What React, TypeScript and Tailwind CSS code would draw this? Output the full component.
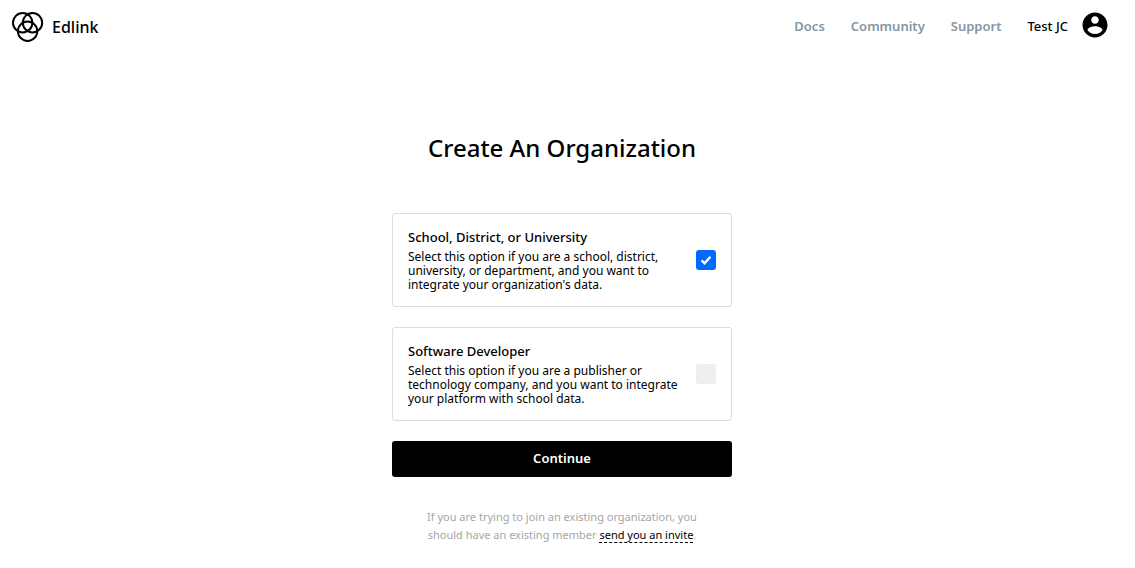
import { useState } from "react";

const links = ["Docs", "Community", "Support"];

const options = [
  {
    id: "school",
    title: "School, District, or University",
    text: "Select this option if you are a school, district, university, or department, and you want to integrate your organization's data.",
  },
  {
    id: "developer",
    title: "Software Developer",
    text: "Select this option if you are a publisher or technology company, and you want to integrate your platform with school data.",
  },
];

function Logo() {
  return (
    <svg className="h-[30px] w-8" viewBox="0 0 32 30" fill="none" stroke="#000" strokeWidth="2" aria-hidden="true">
      <circle cx="10.700" cy="10.700" r="9.700" />
      <circle cx="20.500" cy="10.700" r="9.700" />
      <circle cx="15.600" cy="19.200" r="9.700" />
    </svg>
  );
}

function Avatar() {
  return (
    <svg className="size-[30px]" viewBox="0 0 24 24" fill="#000" aria-hidden="true">
      <path d="M12 2C6.48 2 2 6.48 2 12s4.48 10 10 10 10-4.480 10-10S17.520 2 12 2zm0 3c1.660 0 3 1.340 3 3s-1.340 3-3 3-3-1.340-3-3 1.340-3 3-3zm0 14.200c-2.500 0-4.710-1.280-6-3.220.030-1.990 4-3.080 6-3.080 1.990 0 5.970 1.090 6 3.080-1.290 1.940-3.500 3.220-6 3.220z" />
    </svg>
  );
}

export default function App() {
  const [selected, setSelected] = useState("school");

  return (
    <div className="min-h-screen bg-white pr-[11px] font-['Noto_Sans',sans-serif] text-black">
      <header className="flex items-start justify-between pt-[10px] pb-2 pl-3 pr-[14px]">
        <a href="#home" className="flex h-[34px] items-center gap-2 text-[16px] font-medium">
          <Logo />
          Edlink
        </a>
        <nav className="flex items-end gap-[26px] text-[13px] leading-7 font-semibold text-[#8496a3]">
          {links.map((link) => (
            <a key={link} href={`#${link.toLowerCase()}`}>
              {link}
            </a>
          ))}
          <a href="#account" className="flex items-end gap-3 font-medium text-black">
            Test JC
            <Avatar />
          </a>
        </nav>
      </header>

      <main className="mx-auto flex max-w-[340px] flex-col pt-20">
        <h1 className="whitespace-nowrap text-center text-2xl leading-[31px] font-medium">Create An Organization</h1>

        <form className="mt-[50px] flex flex-col gap-5" onSubmit={(e) => e.preventDefault()}>
          {options.map((option) => (
            <label
              key={option.id}
              htmlFor={option.id}
              className="flex items-center justify-between gap-4 rounded-[3px] border border-[#dcdcdc] px-[15px] py-[14px]"
            >
              <span className="flex w-[270px] flex-col gap-1">
                <span className="text-[13px] leading-[18px] font-medium">{option.title}</span>
                <span className="text-[12px] leading-[14px]">{option.text}</span>
              </span>
              <span className="relative size-5 shrink-0">
                <input
                  id={option.id}
                  type="checkbox"
                  checked={selected === option.id}
                  onChange={() => setSelected(option.id)}
                  className="block size-5 appearance-none rounded-[3px] bg-[#eeeeee] checked:bg-[#0069ff]"
                />
                {selected === option.id && (
                  <svg
                    className="pointer-events-none absolute inset-0"
                    viewBox="0 0 20 20"
                    fill="none"
                    stroke="#fff"
                    strokeWidth="2.4"
                    aria-hidden="true"
                  >
                    <path d="M5.600 10.400L8.600 13.300L14.400 6.800" />
                  </svg>
                )}
              </span>
            </label>
          ))}
          <button type="submit" className="h-9 rounded-[3px] bg-black text-[13px] font-semibold text-white">
            Continue
          </button>
        </form>

        <p className="mt-[31px] px-7 text-center text-[11px] leading-[18px] text-[#a6a6a6]">
          If you are trying to join an existing organization, you should have an existing member{" "}
          <a href="#invite" className="border-b border-dashed border-black text-black">
            send you an invite
          </a>
          .
        </p>
      </main>
    </div>
  );
}
